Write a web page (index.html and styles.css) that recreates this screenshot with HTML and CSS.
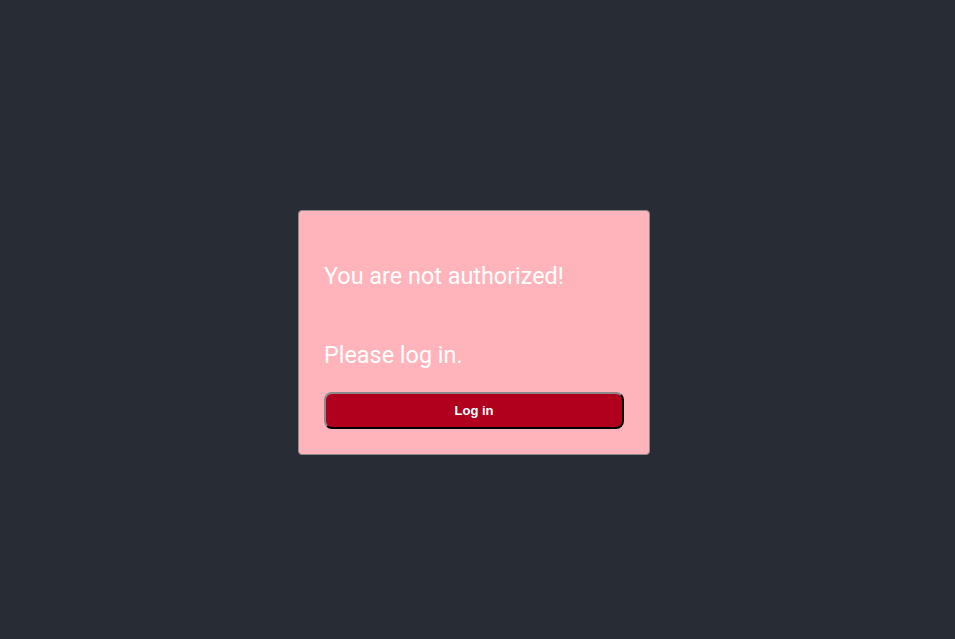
FILE: index.html
```html
<!DOCTYPE html>
<html>
<head>
<meta charset="utf-8">
<link rel="stylesheet" href="styles.css">
</head>
<body>
<main class="page">
  <section class="card">
    <p class="msg msg-first">You are not authorized!</p>
    <p class="msg msg-second">Please log in.</p>
    <button class="login-btn" type="button">Log in</button>
  </section>
</main>
</body>
</html>
```
FILE: styles.css
```css
html, body {
  margin: 0;
  padding: 0;
  height: 100%;
}
body {
  background: #282c35;
  font-family: Roboto, "Noto Sans", sans-serif;
}
.page {
  height: 100%;
  display: flex;
  align-items: center;
  justify-content: center;
}
.card {
  box-sizing: border-box;
  width: 352px;
  background: #ffb3ba;
  border: 1px solid #8a8a8a;
  border-radius: 4px;
  padding: 25px;
  display: flex;
  flex-direction: column;
  margin-top: 26px;
  margin-right: 7px;
}
.msg {
  margin: 0;
  color: #ffffff;
  font-size: 23.4px;
  line-height: 29px;
}
.msg-first {
  margin-top: 26px;
}
.msg-second {
  margin-top: 50px;
}
.login-btn {
  margin-top: 22px;
  height: 37px;
  width: 100%;
  background: #b0001e;
  color: #ffffff;
  font-family: "Liberation Sans", Arial, sans-serif;
  font-weight: bold;
  font-size: 13px;
  border-radius: 8px;
  border: 2px outset #777777;
  border-top-color: #8a8a8a;
  border-left-color: #8a8a8a;
  border-right-color: #262626;
  border-bottom-color: #262626;
}
```
